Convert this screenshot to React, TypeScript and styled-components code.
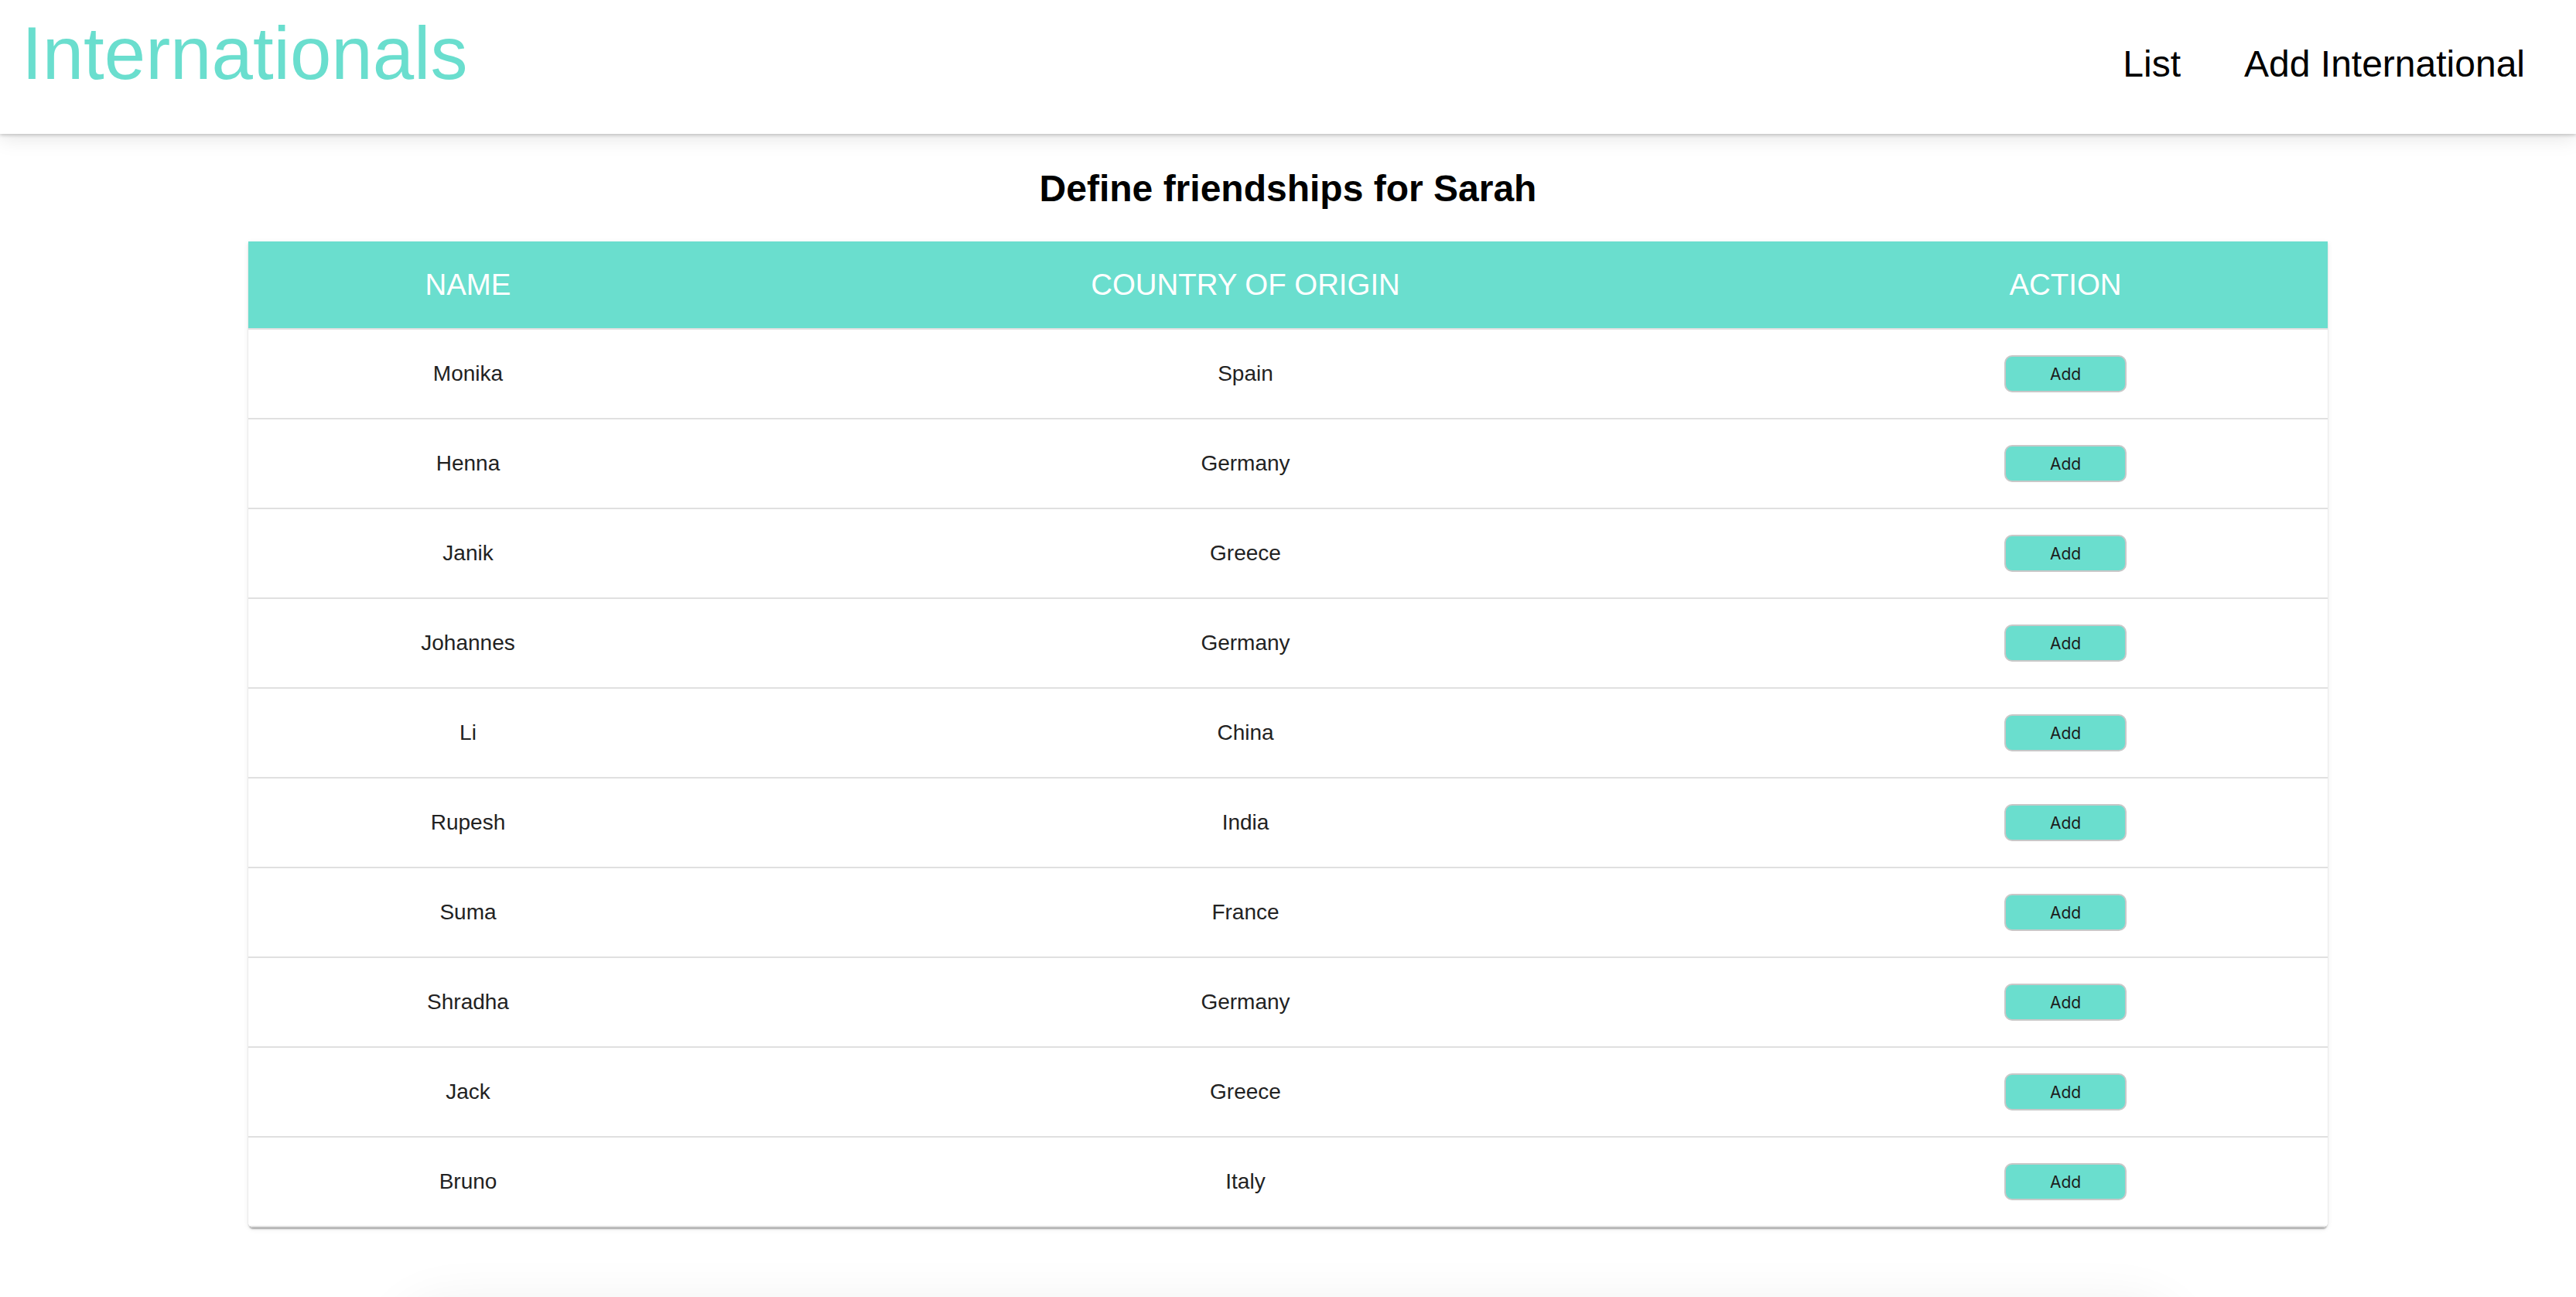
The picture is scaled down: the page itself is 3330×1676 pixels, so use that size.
import React from "react";
import styled, { createGlobalStyle } from "styled-components";

const TEAL = "#6adece";

const GlobalStyle = createGlobalStyle`
  html, body {
    margin: 0;
    padding: 0;
    background: #ffffff;
    overflow: hidden;
  }
  body {
    font-family: "Liberation Sans", Arial, Helvetica, sans-serif;
    color: #000;
  }
  * { box-sizing: border-box; }
`;

const Page = styled.div`
  display: flex;
  flex-direction: column;
  align-items: center;
  height: 1676px;
  overflow: hidden;
`;

const Header = styled.header`
  align-self: stretch;
  flex-shrink: 0;
  height: 173px;
  display: flex;
  justify-content: space-between;
  align-items: flex-start;
  padding: 0 66px 0 28px;
  background: #fff;
  box-shadow: 0 2px 4px rgba(0, 0, 0, 0.18), 0 6px 24px rgba(0, 0, 0, 0.1);
  position: relative;
  z-index: 1;
`;

const Brand = styled.h1`
  margin: 21px 0 0;
  font-size: 96px;
  line-height: 96px;
  font-weight: 400;
  color: ${TEAL};
`;

const Nav = styled.nav`
  display: flex;
  gap: 82px;
  margin-top: 59px;
`;

const NavLink = styled.a`
  font-size: 48px;
  line-height: 48px;
  color: #000;
  text-decoration: none;
`;

const Heading = styled.h2`
  margin: 43px 0 41px;
  font-size: 48px;
  line-height: 55px;
  font-weight: 700;
  text-align: center;
`;

const Card = styled.div`
  width: 2688px;
  flex-shrink: 0;
  background: #fff;
  border-radius: 0 0 6px 6px;
  overflow: hidden;
  box-shadow: 0 4px 2px -2px rgba(0, 0, 0, 0.2), 0 2px 2px 0 rgba(0, 0, 0, 0.14),
    0 2px 6px 0 rgba(0, 0, 0, 0.1);
`;

const Row = styled.div<{ $head?: boolean }>`
  display: grid;
  grid-template-columns: 568px 1442px 678px;
  align-items: center;
  height: ${(p) => (p.$head ? "114px" : "116px")};
  border-bottom: 2px solid #e0e0e0;
  background: ${(p) => (p.$head ? TEAL : "#fff")};
`;

const HeadCell = styled.div`
  text-align: center;
  color: #fff;
  font-size: 38.4px;
  font-weight: 400;
`;

const Cell = styled.div`
  text-align: center;
  color: #222;
  font-size: 28px;
  display: flex;
  justify-content: center;
`;

const AddButton = styled.button`
  width: 158px;
  height: 48px;
  border: 2px solid #c8c8c8;
  border-radius: 10px;
  background: ${TEAL};
  color: #1c1c1c;
  font-family: Inter, "Liberation Sans", sans-serif;
  font-size: 21px;
  padding: 0;
  cursor: pointer;
`;

const Ghost = styled.div`
  width: 2300px;
  height: 300px;
  flex-shrink: 0;
  margin-top: 100px;
  border-radius: 60px;
  background: #fff;
  box-shadow: 0 0 70px rgba(0, 0, 0, 0.07);
`;

const people: [string, string][] = [
  ["Monika", "Spain"],
  ["Henna", "Germany"],
  ["Janik", "Greece"],
  ["Johannes", "Germany"],
  ["Li", "China"],
  ["Rupesh", "India"],
  ["Suma", "France"],
  ["Shradha", "Germany"],
  ["Jack", "Greece"],
  ["Bruno", "Italy"],
];

export default function App() {
  return (
    <>
      <GlobalStyle />
      <Page>
        <Header>
          <Brand>Internationals</Brand>
          <Nav>
            <NavLink href="#">List</NavLink>
            <NavLink href="#">Add International</NavLink>
          </Nav>
        </Header>
        <Heading>Define friendships for Sarah</Heading>
        <Card>
          <Row $head>
            <HeadCell>NAME</HeadCell>
            <HeadCell>COUNTRY OF ORIGIN</HeadCell>
            <HeadCell>ACTION</HeadCell>
          </Row>
          {people.map(([name, country]) => (
            <Row key={name}>
              <Cell>{name}</Cell>
              <Cell>{country}</Cell>
              <Cell>
                <AddButton>Add</AddButton>
              </Cell>
            </Row>
          ))}
        </Card>
        <Ghost />
      </Page>
    </>
  );
}
